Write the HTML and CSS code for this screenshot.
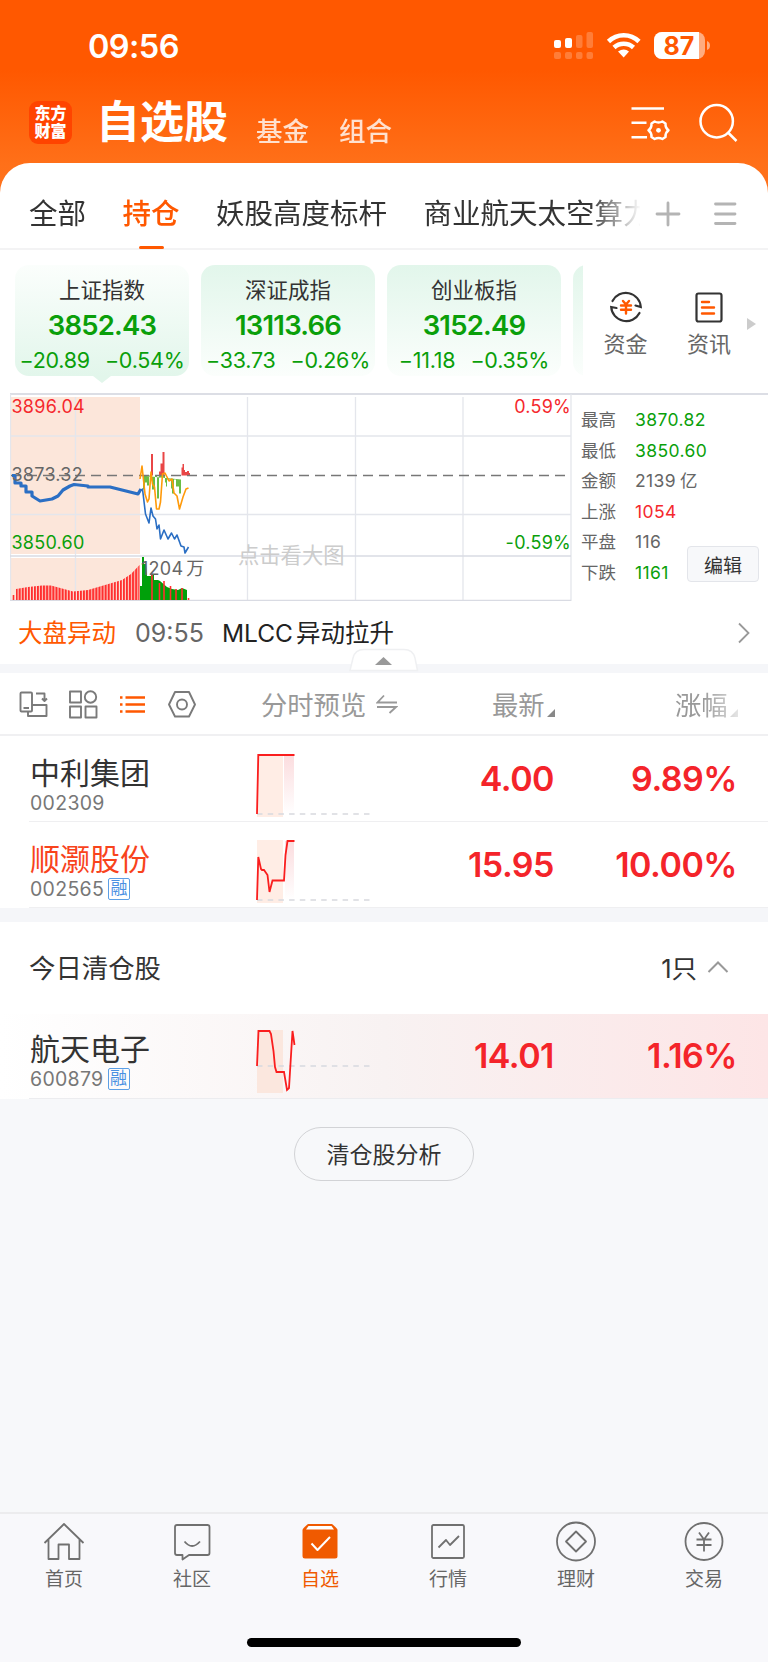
FILE: index.html
```html
<!DOCTYPE html>
<html lang="zh-CN">
<head>
    <meta charset="UTF-8">
    <meta name="viewport" content="width=device-width, initial-scale=1.0">
    <title>自选股</title>
    <link rel="stylesheet" href="styles.css">
</head>
<body>
    <header class="top">
        <div class="status">
            <span class="time">09:56</span>
            <svg class="status-icons" width="160" height="30" viewBox="0 0 160 30">
                <g fill="#fff">
                    <rect x="1" y="9" width="7" height="8" rx="2"/>
                    <rect x="12" y="7" width="7" height="10" rx="2"/>
                    <g opacity=".22">
                        <rect x="23" y="4" width="6.5" height="13" rx="2"/>
                        <rect x="33.500" y="1" width="6.500" height="16" rx="2"/>
                        <rect x="1" y="21" width="7" height="7" rx="2"/>
                        <rect x="12" y="21" width="7" height="7" rx="2"/>
                        <rect x="23" y="21" width="6.500" height="7" rx="2"/>
                        <rect x="33.500" y="21" width="6.500" height="7" rx="2"/>
                    </g>
                    <path d="M65 20.500 Q71 16.500 76 20.500 L70.700 26.500Z"/>
                    <rect x="101" y="1" width="51" height="27" rx="8" opacity=".5"/>
                    <path d="M109 1h37v27h-37a8 8 0 0 1-8-8V9a8 8 0 0 1 8-8Z"/>
                    <path d="M154 10q3 1 3 4.500t-3 4.500Z" opacity=".5"/>
                </g>
                <path d="M55.500 10.500C64 2.200 77.500 2.200 86 10.500M61 16.500C66.500 11.500 75 11.500 80.500 16.500" fill="none" stroke="#fff" stroke-width="4.600"/>
                <text class="battery" x="126" y="23.500">87</text>
            </svg>
        </div>
        <div class="nav">
            <div class="logo">东方<br>财富</div>
            <h1>自选股</h1>
            <span class="nav-item">基金</span>
            <span class="nav-item">组合</span>
            <svg class="nav-icons" width="108" height="42" viewBox="0 0 108 42" fill="none" stroke="#fff" stroke-width="2.500">
                <path d="M1.500 6.500H34M1.500 20.800H16.500M1.500 35.200H17"/>
                <path d="M24.600 19.500Q28.500 21.500 32.400 19.500L35.500 21.500Q35.200 25.800 38.500 28.300Q35.200 30.800 35.500 35L32.400 37Q28.500 35 24.600 37L21.500 35Q21.800 30.800 18.500 28.300Q21.800 25.800 21.500 21.500Z" stroke-linejoin="round"/>
                <circle cx="28.500" cy="28.300" r="2.400" fill="#fff" stroke="none"/>
                <circle cx="86.700" cy="19.200" r="16.200"/>
                <path d="M98 30.500L106.500 39"/>
            </svg>
        </div>
    </header>

    <main>
        <nav class="groups">
            <div class="group-list">
                <span>全部</span>
                <span class="active">持仓</span>
                <span>妖股高度标杆</span>
                <span>商业航天太空算力</span>
            </div>
            <svg width="84" height="30" viewBox="0 0 84 30" fill="none" stroke="#b4b4b4" stroke-width="2.800" stroke-linecap="round">
                <path d="M2 15H24M13 4V26M60.500 5H80M60.500 15H80M60.500 24.500H80"/>
            </svg>
        </nav>

        <section class="indices">
            <div class="cards">
                <div class="card selected">
                    <div class="card-name">上证指数</div>
                    <div class="card-value">3852.43</div>
                    <div class="card-diff"><span>−20.89</span><span>−0.54%</span></div>
                </div>
                <div class="card">
                    <div class="card-name">深证成指</div>
                    <div class="card-value">13113.66</div>
                    <div class="card-diff"><span>−33.73</span><span>−0.26%</span></div>
                </div>
                <div class="card">
                    <div class="card-name">创业板指</div>
                    <div class="card-value">3152.49</div>
                    <div class="card-diff"><span>−11.18</span><span>−0.35%</span></div>
                </div>
                <div class="card"></div>
            </div>
            <div class="shortcuts">
                <div class="shortcut">
                    <svg width="36" height="36" viewBox="0 0 36 36" fill="none" stroke="#333" stroke-width="2.200" stroke-linecap="round">
                        <path d="M4.500 12A15 15 0 0 1 32.800 18L27.500 16.500M31.500 24A15 15 0 0 1 3.200 18L8.500 19"/>
                        <path d="M15 12L18 15.500L21 12M13 16.500H23M13 20.800H23M18 15.500V24.500" stroke="#ff5800" stroke-width="2.400"/>
                    </svg>
                    资金
                </div>
                <div class="shortcut">
                    <svg width="36" height="36" viewBox="0 0 36 36" fill="none" stroke="#333" stroke-width="2.200" stroke-linecap="round">
                        <rect x="5.500" y="4.500" width="25" height="28" rx="2"/>
                        <path d="M11 13H18M11 18.500H23M11 24.500H23" stroke="#ff5800" stroke-width="2.400"/>
                    </svg>
                    资讯
                </div>
                <svg width="10" height="14" viewBox="0 0 10 14"><path d="M0 1L9 7L0 13Z" fill="#ccc"/></svg>
            </div>
        </section>

        <section class="market">
            <svg class="chart" width="562" height="208" viewBox="10 393 562 208">
                <defs>
                    <pattern id="bars" x="15.500" width="3.070" height="60" patternUnits="userSpaceOnUse">
                        <rect width="2.100" height="60" fill="#ff2f2f"/>
                    </pattern>
                </defs>
                <path d="M11 397H140V554H11ZM11 558H140V601H11Z" fill="#fce6da"/>
                <path d="M10.500 394V601M571 394V601M10 436H571M10 514.500H571M75.500 397V601M247.500 397V601M355.500 397V601M463 397V601" stroke="#e4e6ec" fill="none" stroke-width="1.300"/>
                <path d="M10 556H571M10 600.500H571" stroke="#d9dbe3" fill="none" stroke-width="1.500"/>
                <text class="watermark" x="238" y="563">点击看大图</text>
                <path d="M12.500 600V595H14.500V600ZM16 600V589L28 587L42 585.500H51L64 589L73 591.500L88 590L105 585L122 580L131 574L139.500 565V600Z" fill="url(#bars)"/>
                <path d="M140 600V586H142V557H144V564H146L147 576L151 576V575H154V580H158L160 581L167 587L172 589L178 590L182 588L187 590V600Z" fill="#00a00a"/>
                <path d="M152 575V600M159.500 583V600M164 581V600M170.500 586V600M176 589V600M182 588V600M188.500 598V600" stroke="#ff2f2f" stroke-width="1.600"/>
                <path d="M141 475.500h2v14h2v-7h2v3h2v-10h3v14h3v-14h2v23h2v-23h6v7h1v4h1v-7h4v9h1v5h2v-14h2v7h3v7h2v-14Z" fill="#69bd45"/>
                <path d="M151 475.500V454h2v21.500ZM159 475.500v-4h1.500v-8h2V452h2v23.500ZM173 475.500h1ZM181.500 475.500v-8h1V464h1.500v6h1v2h2v-1h2v2h1v2.500Z" fill="#e94646"/>
                <path d="M11 475.500H571" stroke="#777" stroke-width="1.300" stroke-dasharray="10 6"/>
                <path d="M12 475.500H15V483H21V486H26V492H32V496L40 501L46 500L52 499L58 496L63 490L70 486L74 484.500L88 486V487H110L122 490L138 494L141 489" fill="none" stroke="#2b6fc4" stroke-width="3.200" stroke-linejoin="round"/>
                <path d="M140 491L142.500 489L145.500 514L149 523L151 508L153 516L155.500 519L157 529L159 525L160.500 539L164 530L168 539L171.500 533L174.500 539L177 535L181 546L184 547L185 553L188.500 547" fill="none" stroke="#2b6fc4" stroke-width="1.600" stroke-linejoin="round"/>
                <path d="M140 479L142 466L145 494L147.500 502L149 499L151 472L152.500 484L154.500 487L156.500 509H159L160.500 502L162.500 474L165 473L169 481L172 479L174 493L177 496L179.500 509L183 497L186 489L188.500 488" fill="none" stroke="#ff9a0a" stroke-width="1.600" stroke-linejoin="round"/>
                <g class="axis">
                    <text class="up" x="11.500" y="413">3896.04</text>
                    <text x="11.500" y="481">3873.32</text>
                    <text class="down" x="11.500" y="549">3850.60</text>
                    <text x="141" y="575">1204<tspan dx="3">万</tspan></text>
                    <text class="up end" x="571" y="413">0.59%</text>
                    <text class="down end" x="571" y="549">-0.59%</text>
                </g>
            </svg>
            <dl class="stats">
                <dt>最高</dt><dd class="down">3870.82</dd>
                <dt>最低</dt><dd class="down">3850.60</dd>
                <dt>金额</dt><dd>2139<i>亿</i></dd>
                <dt>上涨</dt><dd class="up">1054</dd>
                <dt>平盘</dt><dd>116</dd>
                <dt>下跌</dt><dd class="down">1161</dd>
            </dl>
            <button class="edit">编辑</button>
        </section>

        <section class="news">
            <span class="news-tag">大盘异动</span>
            <span class="news-time">09:55</span>
            <span class="news-title">MLCC<i>异动拉升</i></span>
            <svg width="14" height="22" viewBox="0 0 14 22"><path d="M2 1.500L11.500 11L2 20.500" fill="none" stroke="#999" stroke-width="1.800"/></svg>
        </section>
        <div class="band">
            <svg class="fold" width="70" height="24" viewBox="0 0 70 24">
                <path d="M1 22.500L4 10Q6 1.500 15 1.500H55Q64 1.500 66 10L68.500 22.500Z" fill="#fff" stroke="#eff0f2" stroke-width="1.500"/>
                <path d="M26 17L34.500 9L43 17Z" fill="#999"/>
            </svg>
        </div>

        <section class="list-head">
            <svg class="view-icons" width="180" height="32" viewBox="18 688 180 32" fill="none" stroke="#7a7a7a" stroke-width="1.900" stroke-linejoin="round">
                <rect x="20.500" y="692.500" width="11.500" height="19" rx="1"/>
                <path d="M23.500 708H29M36 693.500H44.500V700M42 698.500L44.500 701L47 698.500M32 705H46.500V716H28V712"/>
                <rect x="70" y="691.500" width="11" height="11"/>
                <circle cx="90.500" cy="697" r="5.700"/>
                <rect x="70" y="706.500" width="11" height="11"/>
                <rect x="85.500" y="706.500" width="11" height="11"/>
                <path d="M125.500 697.500H145M125.500 704.500H145M125.500 711.500H145M120 697.500H122.500M120 704.500H122.500M120 711.500H122.500" stroke="#ff5800" stroke-width="2.500"/>
                <path d="M175 692H189L195 704.500L189 716.500H175L169 704.500Z"/>
                <circle cx="182" cy="704.500" r="5"/>
            </svg>
            <span class="col-chart">分时预览
                <svg width="22" height="20" viewBox="0 0 22 20" fill="none" stroke="#999" stroke-width="1.800"><path d="M8 1.500L1.500 8.500H21M1 13H20L13.500 19"/></svg>
            </span>
            <span class="col-price">最新<svg width="8" height="8" viewBox="0 0 8 8"><path d="M8 0V8H0Z" fill="#888"/></svg></span>
            <span class="col-change">涨幅<svg width="8" height="8" viewBox="0 0 8 8"><path d="M8 0V8H0Z" fill="#aaa"/></svg></span>
        </section>

        <section class="stocks">
            <div class="stock">
                <div class="stock-info">
                    <div class="stock-name">中利集团</div>
                    <div class="stock-code">002309</div>
                </div>
                <svg class="spark" width="116" height="66" viewBox="0 0 116 66">
                    <defs><linearGradient id="fade" x2="0" y2="1"><stop stop-color="#fbdcde"/><stop offset="1" stop-color="#fff"/></linearGradient></defs>
                    <rect x="1" y="1" width="26" height="63" fill="#ffede5"/>
                    <rect x="28" y="2" width="10" height="59" fill="url(#fade)"/>
                    <path d="M1 61H115" stroke="#d8d9de" stroke-width="1.600" stroke-dasharray="5.500 5.200"/>
                    <path d="M1 61L2.300 2H38.500" fill="none" stroke="#fa1e1e" stroke-width="1.800"/>
                </svg>
                <span class="price">4.00</span>
                <span class="change">9.89%</span>
            </div>
            <div class="stock">
                <div class="stock-info">
                    <div class="stock-name hot">顺灏股份</div>
                    <div class="stock-code">002565<b>融</b></div>
                </div>
                <svg class="spark" width="116" height="66" viewBox="0 0 116 66">
                    <rect x="1" y="1" width="26" height="63" fill="#ffede5"/>
                    <rect x="29" y="2" width="9" height="59" fill="url(#fade)"/>
                    <path d="M1 61H115" stroke="#d8d9de" stroke-width="1.600" stroke-dasharray="5.500 5.200"/>
                    <path d="M1 61L2.300 18L5 30L6 31H8L11.500 36L13.500 53L16.500 41.500H28L29.500 16L31.500 2H38.500" fill="none" stroke="#fa1e1e" stroke-width="1.800"/>
                </svg>
                <span class="price">15.95</span>
                <span class="change">10.00%</span>
            </div>
        </section>
        <div class="band wide"></div>

        <section class="cleared">
            <span class="cleared-title">今日清仓股</span>
            <span class="cleared-count">1只</span>
            <svg width="22" height="14" viewBox="0 0 22 14"><path d="M1.500 12L11 2.500L20.500 12" fill="none" stroke="#999" stroke-width="2"/></svg>
        </section>
        <section class="stocks">
            <div class="stock tinted">
                <div class="stock-info">
                    <div class="stock-name">航天电子</div>
                    <div class="stock-code">600879<b>融</b></div>
                </div>
                <svg class="spark" width="116" height="66" viewBox="0 0 116 66">
                    <rect x="1" y="1" width="26" height="63" fill="#fbe7de"/>
                    <path d="M1 37H115" stroke="#d6d9e0" stroke-width="1.600" stroke-dasharray="5.500 5.200"/>
                    <path d="M1 37L2.500 2H13.500L15 5L17.500 22L19 38L20.500 43H28L31 61L33 59L36.500 2L38.500 16" fill="none" stroke="#fa1e1e" stroke-width="1.800"/>
                </svg>
                <span class="price">14.01</span>
                <span class="change">1.16%</span>
            </div>
        </section>
    </main>

    <div class="analysis"><button>清仓股分析</button></div>

    <footer>
        <div class="tabbar">
            <div class="tab">
                <svg width="44" height="44" viewBox="0 0 44 44"><path d="M2.500 22L22 3L41.500 22M6.500 18.500V38H16.500V23.500H27V38H37.500V18.500"/></svg>
                首页
            </div>
            <div class="tab">
                <svg width="44" height="44" viewBox="0 0 44 44"><path d="M7 4H37.500Q39.500 4 39.500 6V32Q39.500 34 37.500 34H19L12.500 38.500V34H7Q5 34 5 32V6Q5 4 7 4ZM14.500 20.500Q22 29.500 30 20.500"/></svg>
                社区
            </div>
            <div class="tab current">
                <svg width="44" height="44" viewBox="0 0 44 44">
                    <path class="solid" d="M10 3H34Q39.500 7.500 39.500 9V35Q39.500 37.500 37 37.500H7Q4.500 37.500 4.500 35V9Q4.500 7.500 10 3Z"/>
                    <path class="lid" d="M10.500 5H33.500L36 8.500H8Z"/>
                    <path class="tick" d="M13.500 22.500L19.500 29L32 16"/>
                </svg>
                自选
            </div>
            <div class="tab">
                <svg width="44" height="44" viewBox="0 0 44 44"><rect x="6" y="4" width="32" height="33" rx="1.500"/><path d="M12.500 26.500L20 19L24 24L33 15"/></svg>
                行情
            </div>
            <div class="tab">
                <svg width="44" height="44" viewBox="0 0 44 44"><circle cx="22" cy="20.500" r="19"/><path d="M22 10.500L32 20.500L22 30.500L12 20.500Z"/></svg>
                理财
            </div>
            <div class="tab">
                <svg width="44" height="44" viewBox="0 0 44 44"><circle cx="22" cy="20.500" r="18.500"/><path d="M17 11.500L22 18.500L27 11.500M14.500 18.500H29.500M14.500 24H29.500M22 18.500V30.500"/></svg>
                交易
            </div>
        </div>
        <div class="home-bar"></div>
    </footer>
</body>
</html>
```
FILE: styles.css
```css
* {
    box-sizing: border-box;
}
html, body {
    margin: 0;
    padding: 0;
}
body {
    display: flex;
    flex-direction: column;
    width: 768px;
    height: 1662px;
    overflow: hidden;
    background: #f7f8fa;
    color: #333;
    font-family: Inter, "Noto Sans CJK SC", sans-serif;
}
svg {
    display: block;
    flex: none;
}
i {
    font-style: normal;
    margin-left: 4px;
}
button {
    font-family: inherit;
    color: #333;
    padding: 0;
}
.up {
    color: #f5282d;
    fill: #f5282d;
}
.down {
    color: #0a9f0a;
    fill: #0a9f0a;
}

/* header */
.top {
    height: 210px;
    margin-bottom: -47px;
    background: linear-gradient(#ff5800 0, #ff5800 70px, #ff7019 165px, #ff7420 210px);
    color: #fff;
}
.status {
    display: flex;
    justify-content: space-between;
    align-items: center;
    height: 92px;
    padding: 0 55px 0 88px;
}
.time {
    font-size: 32.5px;
    font-weight: 600;
    letter-spacing: -0.6px;
}
.status-icons {
    margin-top: -1px;
}
.battery {
    font-size: 25px;
    font-weight: 700;
    fill: #ff5800;
    text-anchor: middle;
}
.nav {
    display: flex;
    height: 71px;
    padding: 0 30px 0 29px;
}
.logo {
    width: 43px;
    height: 43px;
    margin-top: 9px;
    padding-top: 3px;
    border-radius: 9px;
    background: #ff4400;
    font-size: 16px;
    font-weight: 900;
    line-height: 18px;
    text-align: center;
}
h1 {
    margin: 0 0 0 24px;
    font-size: 44px;
    font-weight: 600;
    line-height: 61px;
}
.nav-item {
    margin: 13px 0 0 30px;
    font-size: 26.5px;
    font-weight: 500;
    line-height: 52px;
    opacity: .8;
}
h1 + .nav-item {
    margin-left: 28px;
}
.nav-icons {
    margin: 10px 0 0 auto;
}

/* watch list groups */
main {
    position: relative;
    border-radius: 30px 30px 0 0;
    background: #fff;
}
.groups {
    display: flex;
    align-items: center;
    justify-content: space-between;
    height: 87px;
    padding: 0 29px 0 29px;
    border-bottom: 2px solid #f3f3f4;
}
.groups > svg {
    margin-top: 17px;
}
.group-list {
    display: flex;
    gap: 36.5px;
    width: 611px;
    height: 87px;
    overflow: hidden;
    font-size: 28.5px;
    line-height: 104px;
    white-space: nowrap;
    -webkit-mask-image: linear-gradient(90deg, #000 560px, transparent 612px);
    mask-image: linear-gradient(90deg, #000 560px, transparent 612px);
}
.active {
    display: flex;
    flex-direction: column;
    align-items: center;
    color: #ff5800;
    font-weight: 500;
}
.active::after {
    content: "";
    width: 25px;
    height: 4px;
    margin-top: -20px;
    border-radius: 2px;
    background: #ff5800;
}

/* index cards */
.indices {
    display: flex;
    height: 143px;
    padding: 15px 0 0 15px;
}
.cards {
    display: flex;
    gap: 12px;
    width: 568px;
    height: 128px;
    overflow: hidden;
}
.card {
    position: relative;
    flex: none;
    width: 174px;
    height: 111px;
    border-radius: 14px;
    background: linear-gradient(#e2f6eb, #fbfefc);
    text-align: center;
}
.card.selected {
    background: linear-gradient(#fbfefc, #e2f6eb);
}
.card.selected::after {
    content: "";
    position: absolute;
    top: 111px;
    left: 78px;
    border: 9px solid transparent;
    border-top: 7px solid #e2f6eb;
    border-bottom: 0;
}
.card-name {
    height: 42px;
    font-size: 21.5px;
    line-height: 51px;
}
.card-value {
    color: #0a9f0a;
    font-size: 27.5px;
    font-weight: 600;
    line-height: 36px;
    letter-spacing: -0.8px;
}
.card-diff {
    display: flex;
    justify-content: center;
    gap: 15px;
    color: #0a9f0a;
    font-size: 21.5px;
    line-height: 34px;
    letter-spacing: -0.25px;
}
.shortcuts {
    display: flex;
    padding-top: 24px;
}
.shortcut {
    display: flex;
    flex-direction: column;
    align-items: center;
    width: 84px;
    color: #666;
    font-size: 22px;
    line-height: 38px;
}
.shortcut:first-child {
    padding-left: 1px;
}
.shortcuts > svg {
    margin: 28px 0 0 -4px;
}

/* market chart */
.market {
    position: relative;
    display: flex;
    height: 209px;
    margin-left: 10px;
    border-top: 2px solid #dcdee5;
}
.chart {
    margin-top: -2px;
}
.axis {
    font-size: 18px;
    letter-spacing: 0.25px;
    fill: #666;
}
.end {
    text-anchor: end;
}
.watermark {
    font-size: 21.3px;
    fill: #ccc;
}
.stats {
    display: grid;
    grid-template-columns: 54px auto;
    align-content: start;
    margin: 10px 0 0 9px;
    color: #666;
    font-size: 17.5px;
    line-height: 30.5px;
}
.stats dd {
    margin: 0;
    letter-spacing: 0.4px;
}
.edit {
    position: absolute;
    right: 9px;
    top: 151px;
    width: 72px;
    height: 36px;
    border: 1.5px solid #e3e5ea;
    border-radius: 4px;
    background: #f7f8fa;
    font-size: 19px;
}

/* news line */
.news {
    display: flex;
    align-items: center;
    height: 62px;
    padding: 0 17px 0 18px;
    font-size: 24.5px;
    line-height: 60px;
}
.news-tag {
    color: #ff5800;
}
.news-time {
    margin: 0 18px 0 19px;
    color: #666;
    font-size: 25px;
}
.news-title {
    flex: 1;
    color: #222;
}
.news-title i {
    margin-left: 3px;
}
.band {
    position: relative;
    height: 9px;
    background: #f5f6f9;
}
.band.wide {
    height: 14px;
}
.fold {
    position: absolute;
    left: 349px;
    top: -16px;
}

/* list header */
.list-head {
    display: flex;
    align-items: center;
    height: 63px;
    padding-left: 18px;
    border-bottom: 2px solid #f0f0f2;
    color: #999;
    font-size: 26.3px;
}
.col-chart {
    display: flex;
    align-items: center;
    gap: 10px;
    width: 231px;
    margin-left: 63px;
}
.col-price, .col-change {
    display: flex;
    align-items: flex-end;
    gap: 2px;
    width: 183px;
}
.col-price svg, .col-change svg {
    margin-bottom: 6px;
}
.col-change {
    width: 64px;
    -webkit-mask-image: linear-gradient(90deg, #000 28px, rgba(0, 0, 0, .3) 64px);
    mask-image: linear-gradient(90deg, #000 28px, rgba(0, 0, 0, .3) 64px);
}

/* stock rows */
.stock {
    display: flex;
    height: 86px;
    padding-right: 30px;
    background: linear-gradient(#efeff1, #efeff1) 29px 100% / 739px 1.5px no-repeat;
}
.stock.tinted {
    height: 85px;
    background: linear-gradient(#ececef, #ececef) 29px 100% / 739px 1.5px no-repeat, linear-gradient(90deg, #fff, #f8f2f2 50%, #fde5e6);
}
.stock-info {
    width: 256px;
    padding: 15px 0 0 30px;
}
.tinted .stock-info {
    padding-top: 13px;
}
.stock-name {
    font-size: 30px;
    line-height: 44px;
}
.hot {
    color: #f8431c;
}
.stock-code {
    display: flex;
    align-items: center;
    gap: 4px;
    height: 21px;
    margin-top: -3px;
    color: #777;
    font-size: 19.5px;
    letter-spacing: 0.3px;
}
.stock-code b {
    width: 22px;
    height: 22px;
    border: 1.5px solid #5b9fe6;
    border-radius: 2px;
    color: #4a90e2;
    font-size: 17px;
    font-weight: 400;
    line-height: 18px;
    letter-spacing: 0;
    text-align: center;
}
.spark {
    margin-top: 17px;
}
.tinted .spark {
    margin-top: 15px;
}
.price, .change {
    width: 183px;
    color: #f4242a;
    font-size: 34px;
    font-weight: 600;
    line-height: 86px;
    letter-spacing: -0.5px;
    text-align: right;
}
.tinted span {
    line-height: 83px;
}
.price {
    width: 182px;
}
.cleared {
    display: flex;
    align-items: center;
    height: 92px;
    padding: 0 39px 3px 29px;
    font-size: 26.4px;
}
.cleared-count {
    margin: 0 10px 0 auto;
    font-size: 25.5px;
}

.analysis {
    flex: 1;
    padding-top: 28px;
    text-align: center;
}
.analysis button {
    width: 180px;
    height: 54px;
    padding-bottom: 2px;
    border: 1.5px solid #d2d3d6;
    border-radius: 27px;
    background: transparent;
    font-size: 23px;
}

/* bottom tabs */
footer {
    height: 150px;
    border-top: 2px solid #ececee;
    background: #f8f8fb;
}
.tabbar {
    display: flex;
    height: 124px;
    padding-top: 7px;
}
.tab {
    display: flex;
    flex-direction: column;
    align-items: center;
    width: 128px;
    color: #666;
    font-size: 19px;
    line-height: 29px;
}
.tab svg {
    fill: none;
    stroke: #707070;
    stroke-width: 1.8;
    stroke-linejoin: round;
}
.tab.current {
    color: #f05a00;
}
.tab .solid {
    fill: #f05a00;
    stroke: none;
}
.tab .lid {
    fill: #fff;
    stroke: none;
}
.tab .tick {
    stroke: #fff;
    stroke-width: 2;
}
.home-bar {
    width: 274px;
    height: 9px;
    margin: 0 auto;
    border-radius: 5px;
    background: #000;
}
```
